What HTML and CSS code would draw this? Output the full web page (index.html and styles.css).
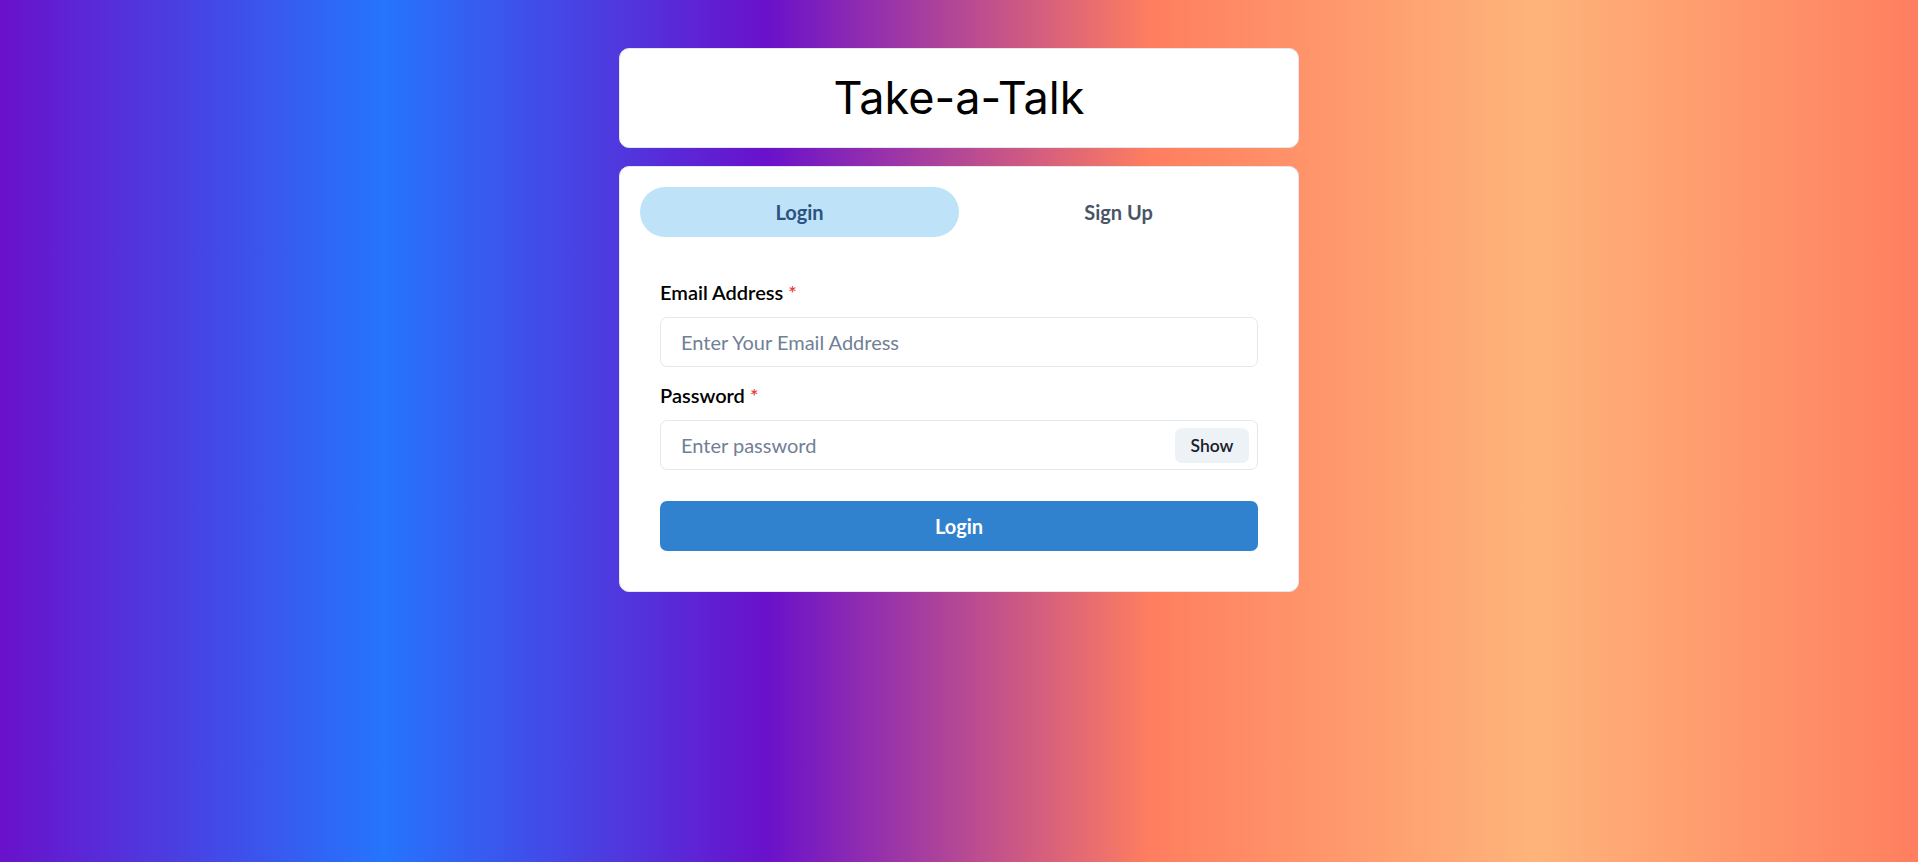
FILE: index.html
```html
<!DOCTYPE html>
<html lang="en">
<head>
<meta charset="utf-8">
<title>Take-a-Talk</title>
<link rel="stylesheet" href="styles.css">
</head>
<body>
  <div class="container">
    <header class="brand">
      <h1 class="brand-title">Take-a-Talk</h1>
    </header>
    <main class="card">
      <div class="tablist">
        <button class="tab tab-active" type="button">Login</button>
        <button class="tab" type="button">Sign Up</button>
      </div>
      <div class="tabpanel">
        <form class="form">
          <div class="field">
            <label class="label" for="email">Email Address<span class="req">*</span></label>
            <input class="input" id="email" type="email" placeholder="Enter Your Email Address">
          </div>
          <div class="field">
            <label class="label" for="password">Password<span class="req">*</span></label>
            <div class="input-group">
              <input class="input-inner" id="password" type="password" placeholder="Enter password">
              <div class="input-right">
                <button class="show-btn" type="button">Show</button>
              </div>
            </div>
          </div>
          <button class="submit" type="button">Login</button>
        </form>
      </div>
    </main>
  </div>
</body>
</html>
```

FILE: styles.css
```css
* { box-sizing: border-box; }

html, body { height: 100%; }

body {
  margin: 0;
  min-height: 100vh;
  font-family: "Lato", "Noto Sans", sans-serif;
  color: #1a202c;
  background: linear-gradient(to right, #6a11cb, #2575fc, #6a11cb, #ff7e5f, #feb47b, #ff7e5f);
}

.container {
  width: 680px;
  margin: 0 auto;
  padding-top: 48px;
  display: flex;
  flex-direction: column;
}

.brand {
  background: #fff;
  border: 1px solid #e2e8f0;
  border-radius: 10px;
  padding: 15px;
  margin-bottom: 18px;
  text-align: center;
}

.brand-title {
  margin: 0;
  font-family: "Inter", "Open Sans", sans-serif;
  font-weight: 400;
  font-size: 45px;
  line-height: 68px;
  color: #000;
}

.card {
  background: #fff;
  border: 1px solid #e2e8f0;
  border-radius: 10px;
  padding: 20px;
}

.tablist {
  display: flex;
  margin-bottom: 20px;
}

.tab {
  flex: 1;
  height: 50px;
  border: 0;
  background: transparent;
  border-radius: 9999px;
  font-family: inherit;
  font-size: 20px;
  font-weight: 700;
  color: #4a5568;
  cursor: pointer;
}

.tab-active {
  background: #bee3f8;
  color: #2c5282;
}

.tabpanel {
  padding: 20px;
}

.form {
  display: flex;
  flex-direction: column;
  gap: 13px;
}

.field {
  display: flex;
  flex-direction: column;
}

.label {
  font-size: 20px;
  line-height: 30px;
  font-weight: 600;
  color: #000;
  margin-bottom: 10px;
}

.req {
  color: #e53e3e;
  margin-left: 5px;
}

.input,
.input-group {
  height: 50px;
  border: 1px solid #e2e8f0;
  border-radius: 7px;
  background: #fff;
}

.input {
  width: 100%;
  padding: 0 20px;
  font-family: inherit;
  font-size: 20px;
  color: #1a202c;
  outline: none;
}

.input-group {
  display: flex;
  align-items: center;
}

.input-inner {
  flex: 1;
  min-width: 0;
  height: 100%;
  border: 0;
  background: transparent;
  padding: 0 0 0 20px;
  font-family: inherit;
  font-size: 20px;
  color: #1a202c;
  outline: none;
}

.input::placeholder,
.input-inner::placeholder {
  color: #718096;
  opacity: 1;
}

.input-right {
  width: 90px;
  height: 100%;
  display: flex;
  align-items: center;
  justify-content: center;
  flex-shrink: 0;
}

.show-btn {
  height: 35px;
  width: 74px;
  border: 0;
  border-radius: 7px;
  background: #edf2f7;
  font-family: inherit;
  font-size: 17.5px;
  font-weight: 600;
  color: #1a202c;
  cursor: pointer;
}

.submit {
  margin-top: 18px;
  height: 50px;
  width: 100%;
  border: 0;
  border-radius: 7px;
  background: #3182ce;
  color: #fff;
  font-family: inherit;
  font-size: 20px;
  font-weight: 700;
  cursor: pointer;
}
```
